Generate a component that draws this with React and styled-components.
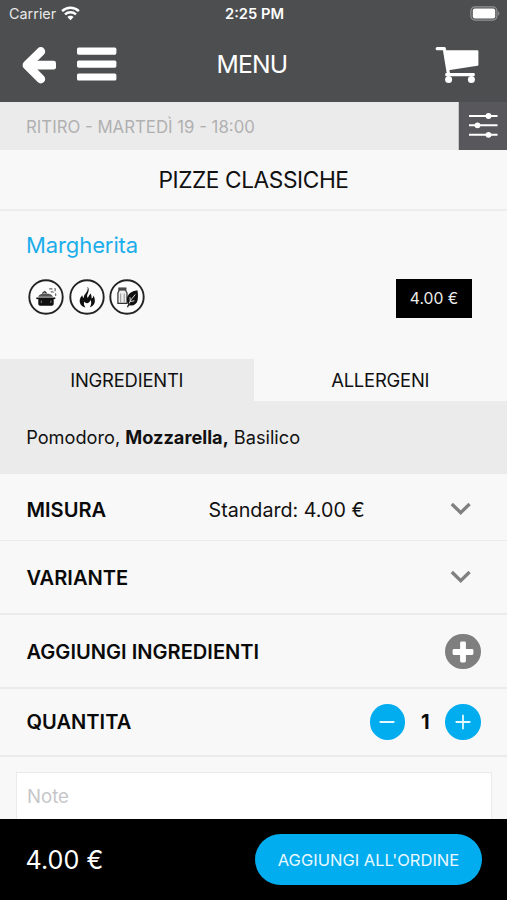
import styled, { createGlobalStyle } from "styled-components";

const GlobalStyle = createGlobalStyle`
  * {
    box-sizing: border-box;
  }
  body {
    margin: 0;
    background: #f8f8f8;
    color: #111;
    font-family: Inter, "Liberation Sans", sans-serif;
  }
  button {
    border: 0;
    padding: 0;
    background: none;
    color: inherit;
    font-family: inherit;
  }
`;

const Screen = styled.div`
  display: flex;
  flex-direction: column;
  width: 507px;
  height: 900px;
  overflow: hidden;
`;

const Header = styled.header`
  flex: none;
  height: 102px;
  background: #4d4e4f;
  color: #fff;
`;
const StatusBar = styled.div`
  display: grid;
  grid-template-columns: 1fr auto 1fr;
  align-items: center;
  height: 27px;
  padding: 0 7px 0 9px;
`;
const Carrier = styled.div`
  display: flex;
  align-items: center;
  gap: 5px;
  font-size: 14.4px;
  color: #e8e8e8;
`;
const Clock = styled.div`
  font-size: 14.7px;
  font-weight: 600;
`;
const BatteryBox = styled.div`
  display: flex;
  justify-content: flex-end;
`;
const NavBar = styled.nav`
  display: grid;
  grid-template-columns: 1fr auto 1fr;
  align-items: center;
  height: 75px;
  padding: 0 28px 0 22px;
`;
const NavGroup = styled.div`
  display: flex;
  align-items: center;
  justify-content: ${({ $end }) => ($end ? "flex-end" : "flex-start")};
  gap: 20px;
`;
const IconButton = styled.button`
  display: flex;
`;
const Title = styled.h1`
  margin: 0 0 0 3px;
  font-size: 24.7px;
  font-weight: 400;
  letter-spacing: -0.8px;
  line-height: 75px;
`;

const PickupBar = styled.div`
  display: flex;
  flex: none;
  height: 48px;
  background: #ebebeb;
`;
const PickupText = styled.div`
  flex: 1;
  padding-left: 26px;
  font-size: 16.8px;
  line-height: 50px;
  color: #b0b0b1;
`;
const FilterButton = styled.button`
  display: flex;
  align-items: center;
  justify-content: center;
  width: 49px;
  border-left: 1px solid #c8c8ca;
  background: #58585c;
`;

const Category = styled.h2`
  flex: none;
  height: 61px;
  margin: 0;
  border-bottom: 2px solid #ededed;
  font-size: 22.7px;
  font-weight: 400;
  letter-spacing: -0.42px;
  line-height: 59px;
  text-align: center;
`;

const Dish = styled.section`
  display: flex;
  flex: none;
  flex-direction: column;
  height: 148px;
  padding: 20px 35px 0 26px;
`;
const DishName = styled.h3`
  margin: 0;
  font-size: 22px;
  font-weight: 400;
  letter-spacing: -0.1px;
  line-height: 28px;
  color: #1caeea;
`;
const DishInfo = styled.div`
  display: flex;
  align-items: center;
  justify-content: space-between;
  margin-top: 19px;
  height: 40px;
`;
const Badges = styled.div`
  display: flex;
  gap: 4.6px;
  padding: 0 0 2px 2px;
`;
const Price = styled.div`
  width: 76px;
  height: 39px;
  background: #000;
  color: #ececec;
  font-size: 15.7px;
  line-height: 39px;
  text-align: center;
`;

const Tabs = styled.div`
  display: flex;
  flex: none;
  height: 42px;
`;
const Tab = styled.button`
  flex: 1;
  background: ${({ $active }) => ($active ? "#ebebeb" : "transparent")};
  font-size: 18.4px;
  letter-spacing: -0.2px;
  line-height: 41px;
`;
const Ingredients = styled.p`
  flex: none;
  height: 73px;
  margin: 0;
  padding-left: 26.2px;
  background: #ebebeb;
  font-size: 18.2px;
  line-height: 73px;
`;

const Row = styled.div`
  display: flex;
  flex: none;
  align-items: center;
  height: ${({ $height }) => $height}px;
  padding: ${({ $top = 0 }) => $top}px 26px 0 26.5px;
  border-bottom: ${({ $line = 2 }) => $line}px solid #ebebeb;
`;
const RowLabel = styled.div`
  flex: ${({ $fixed }) => ($fixed ? "0 0 182px" : 1)};
  font-size: 20.1px;
  font-weight: 600;
  white-space: nowrap;
  color: #0a0a0a;
`;
const RowValue = styled.div`
  flex: 1;
  font-size: 19.7px;
`;
const ChevronBox = styled.div`
  display: flex;
  margin: 0 9px 2px 0;
`;
const Stepper = styled.div`
  display: flex;
  align-items: center;
`;
const Round = styled.button`
  display: flex;
  align-items: center;
  justify-content: center;
  width: 35.6px;
  height: 35.6px;
  border-radius: 50%;
  background: ${({ $color }) => $color};
`;
const Count = styled.div`
  width: 40.3px;
  font-size: 20px;
  font-weight: 700;
  text-align: center;
  color: #0a0a0a;
`;

const NoteArea = styled.div`
  flex: 1;
  min-height: 0;
  padding: 15px 15px 0 16px;
  overflow: hidden;
`;
const NoteInput = styled.input`
  display: block;
  width: 100%;
  height: 60px;
  padding: 0 0 13px 10px;
  border: 1px solid #eaeaea;
  border-radius: 0;
  outline: 0;
  background: #fff;
  font-family: inherit;
  font-size: 18.6px;

  &::placeholder {
    color: #c6c6c9;
    opacity: 1;
  }
`;

const Footer = styled.footer`
  display: flex;
  flex: none;
  align-items: center;
  justify-content: space-between;
  height: 81px;
  padding: 0 25px 0 25.5px;
  background: #000;
  color: #fff;
`;
const Total = styled.div`
  font-size: 25.2px;
`;
const OrderButton = styled.button`
  width: 227px;
  height: 51px;
  border-radius: 26px;
  background: #02adef;
  color: #e9f8fe;
  font-size: 16.5px;
`;

function WifiIcon() {
  return (
    <svg width="19" height="15" viewBox="0 0 19 15" fill="none" stroke="#fff" strokeWidth="2.4">
      <path d="M1.1 5.2C6 .6 13 .6 17.9 5.2" />
      <path d="M4 8.4C7.2 5.5 11.8 5.5 15 8.4" />
      <path d="M9.5 14.2L6.4 11C8 9.3 11 9.3 12.6 11Z" fill="#fff" stroke="none" />
    </svg>
  );
}

function BatteryIcon() {
  return (
    <svg width="30" height="15" viewBox="0 0 30 15">
      <rect x="0.9" y="0.9" width="26" height="13.2" rx="4" fill="none" stroke="#939394" strokeWidth="1.2" />
      <rect x="2.8" y="2.6" width="22.4" height="9.8" rx="2" fill="#fff" />
      <path d="M28.2 5.3c1.7.8 1.7 3.6 0 4.4z" fill="#939394" />
    </svg>
  );
}

function BackIcon() {
  return (
    <svg width="35" height="38" viewBox="0 0 35 38" fill="none" stroke="#fff">
      <path d="M18.8 5.5L5 19.2L18.8 33" strokeWidth="8.8" strokeLinecap="round" strokeLinejoin="round" />
      <rect x="8" y="14.8" width="26" height="8.8" rx="2.4" fill="#fff" stroke="none" />
    </svg>
  );
}

function MenuIcon() {
  return (
    <svg width="40" height="36" viewBox="0 0 40 36" fill="#fff">
      <rect y="0.6" width="39.4" height="7.1" rx="1.6" />
      <rect y="13.6" width="39.4" height="7.1" rx="1.6" />
      <rect y="26.4" width="39.4" height="7.1" rx="1.6" />
    </svg>
  );
}

function CartIcon() {
  return (
    <svg width="44" height="38" viewBox="0 0 44 38" fill="#fff">
      <path d="M2.2 2.7H9.300L13.300 27" fill="none" stroke="#fff" strokeWidth="3.2" strokeLinecap="round" strokeLinejoin="round" />
      <path d="M9.8 4.2H42.400a1 1 0 0 1 1 1V18.8a1 1 0 0 1-.9 1L13.300 24.300z" />
      <rect x="10.2" y="27" width="29.6" height="3.2" rx="1.2" />
      <circle cx="13.6" cy="33.6" r="3.5" />
      <circle cx="36.4" cy="33.6" r="3.5" />
    </svg>
  );
}

function SlidersIcon() {
  return (
    <svg width="30" height="27" viewBox="0 0 30 27" fill="#fff">
      <path d="M1 3h28.5M1 12.300h28.500M1 21.800h28.500" stroke="#fff" strokeWidth="2.1" />
      <circle cx="20.5" cy="3" r="2.9" />
      <circle cx="9.5" cy="12.300" r="2.9" />
      <circle cx="20.5" cy="21.8" r="2.9" />
    </svg>
  );
}

function Badge({ children }) {
  return (
    <svg width="36" height="36" viewBox="0 0 36 36">
      <circle cx="18" cy="18" r="16.7" fill="#fdfdfd" stroke="#242424" strokeWidth="1.9" />
      {children}
    </svg>
  );
}

function PotBadge() {
  return (
    <Badge>
      <path d="M10.3 20h15.4v5q0 1.800-1.800 1.800H12.100q-1.800 0-1.800-1.800z" fill="#111" />
      <path d="M8.3 19.3h19" stroke="#111" strokeWidth="1.6" />
      <path d="M10.2 17.8c.8-2.400 3.400-3.100 6.800-3.300 3.900 0 7 .7 8 3.300z" fill="#555" />
      <path d="M14.3 14.4l2.400-1.800 1.800 1.700" fill="none" stroke="#333" strokeWidth="1.3" />
      <path d="M21.200 10.300q1.800-1.600 3.200.2M22.800 13.200q1.500-1.400 2.700.4M27.100 9.100v3.200M27.600 14.300v2.600" fill="none" stroke="#777" strokeWidth="1.3" />
      <path d="M13.3 21.500v2.600M22.900 21.500v2.600" stroke="#999" strokeWidth=".8" />
    </Badge>
  );
}

function FlameBadge() {
  return (
    <Badge>
      <path
        d="M18.500 7.600c1 3-.6 5.600-2.600 7.800-1 1.200-1.200 2.200-.9 3.600-1-.5-1.700-1.500-1.700-2.800-2.600 2.700-3.400 6-1.900 8.700 1 1.900 2.700 3 5 3.500-1.500-1.900-1.900-3.900-1-5.800.700 1.200 1.700 1.700 2.800 1.600 1.800-.300 3-1.500 3.300-3.400 1.200 2.600.9 5-.7 7.500 2.800-.7 4.600-2.500 5-5.200.3-2.300-.2-4.500-1.300-6.600-.1 1.500-.8 2.500-2 3.100.3-2.200-.1-3.700-1.100-5-1 1.600-2 2.900-2.700 4.400-.8-1.500-.8-2.900.1-4.500 1.300-2.500 1.300-4.900-.3-6.900z"
        fill="#111"
      />
    </Badge>
  );
}

function MilkBadge() {
  return (
    <Badge>
      <path d="M10 9.2h6.8v2.6l1.2 2v10.5H8.900V13.800l1.100-2z" fill="#eee" stroke="#333" strokeWidth="1.2" />
      <path d="M9.700 10.500h7.200" stroke="#444" strokeWidth="2.2" />
      <path d="M11.700 14.500v9M15.200 14.500v9" stroke="#888" strokeWidth=".9" />
      <path d="M28.400 11.200c-6 .9-10.700 4.100-10.500 9.800.1 2.200.8 3.900 2.200 5.400 4.900.8 7.700-1.400 8.500-5.100.6-3.300.5-6.700-.2-10.100z" fill="#111" />
      <path d="M18.600 28.100q2-7.200 7.700-12.600M21.200 21.700l-.2-3.500M21 22.500l4.400-.7" fill="none" stroke="#eee" strokeWidth=".9" />
      <path d="M18.500 28.300l1.700-4" stroke="#111" strokeWidth="1.2" />
    </Badge>
  );
}

function Chevron() {
  return (
    <ChevronBox>
      <svg width="22" height="14" viewBox="0 0 22 14" fill="none" stroke="#808080" strokeWidth="3.3">
        <path d="M1.800 2l8.900 8.600L19.600 2" />
      </svg>
    </ChevronBox>
  );
}

function Sign({ plus, bold }) {
  const r = bold ? 10.4 : 7.3;
  const w = bold ? 5.8 : 1.8;
  return (
    <svg width="22" height="22" viewBox="0 0 22 22" fill={bold ? "#fff" : "#e6f8ff"}>
      <rect x={11 - r} y={11 - w / 2} width={r * 2} height={w} rx={bold ? 1.3 : 0.2} />
      {plus && <rect x={11 - w / 2} y={11 - r} width={w} height={r * 2} rx={bold ? 1.3 : 0.2} />}
    </svg>
  );
}

export default function App() {
  return (
    <Screen>
      <GlobalStyle />
      <Header>
        <StatusBar>
          <Carrier>
            Carrier <WifiIcon />
          </Carrier>
          <Clock>2:25 PM</Clock>
          <BatteryBox>
            <BatteryIcon />
          </BatteryBox>
        </StatusBar>
        <NavBar>
          <NavGroup>
            <IconButton aria-label="Indietro"><BackIcon /></IconButton>
            <IconButton aria-label="Menu"><MenuIcon /></IconButton>
          </NavGroup>
          <Title>MENU</Title>
          <NavGroup $end>
            <IconButton aria-label="Carrello"><CartIcon /></IconButton>
          </NavGroup>
        </NavBar>
      </Header>

      <PickupBar>
        <PickupText>RITIRO - MARTEDÌ 19 - 18:00</PickupText>
        <FilterButton aria-label="Filtri"><SlidersIcon /></FilterButton>
      </PickupBar>
      <Category>PIZZE CLASSICHE</Category>

      <Dish>
        <DishName>Margherita</DishName>
        <DishInfo>
          <Badges>
            <PotBadge />
            <FlameBadge />
            <MilkBadge />
          </Badges>
          <Price>4.00 €</Price>
        </DishInfo>
      </Dish>

      <Tabs>
        <Tab $active>INGREDIENTI</Tab>
        <Tab>ALLERGENI</Tab>
      </Tabs>
      <Ingredients>
        Pomodoro, <b>Mozzarella,</b> Basilico
      </Ingredients>

      <Row $height={67} $top={5} $line={1}>
        <RowLabel $fixed>MISURA</RowLabel>
        <RowValue>Standard: 4.00 €</RowValue>
        <Chevron />
      </Row>
      <Row $height={74} $top={2}>
        <RowLabel>VARIANTE</RowLabel>
        <Chevron />
      </Row>
      <Row $height={74} $top={1}>
        <RowLabel>AGGIUNGI INGREDIENTI</RowLabel>
        <Round $color="#7f7f7f" aria-label="Aggiungi"><Sign plus bold /></Round>
      </Row>
      <Row $height={68}>
        <RowLabel>QUANTITA</RowLabel>
        <Stepper>
          <Round $color="#02adef" aria-label="Meno"><Sign /></Round>
          <Count>1</Count>
          <Round $color="#02adef" aria-label="Più"><Sign plus /></Round>
        </Stepper>
      </Row>

      <NoteArea>
        <NoteInput placeholder="Note" />
      </NoteArea>

      <Footer>
        <Total>4.00 €</Total>
        <OrderButton>AGGIUNGI ALL'ORDINE</OrderButton>
      </Footer>
    </Screen>
  );
}
